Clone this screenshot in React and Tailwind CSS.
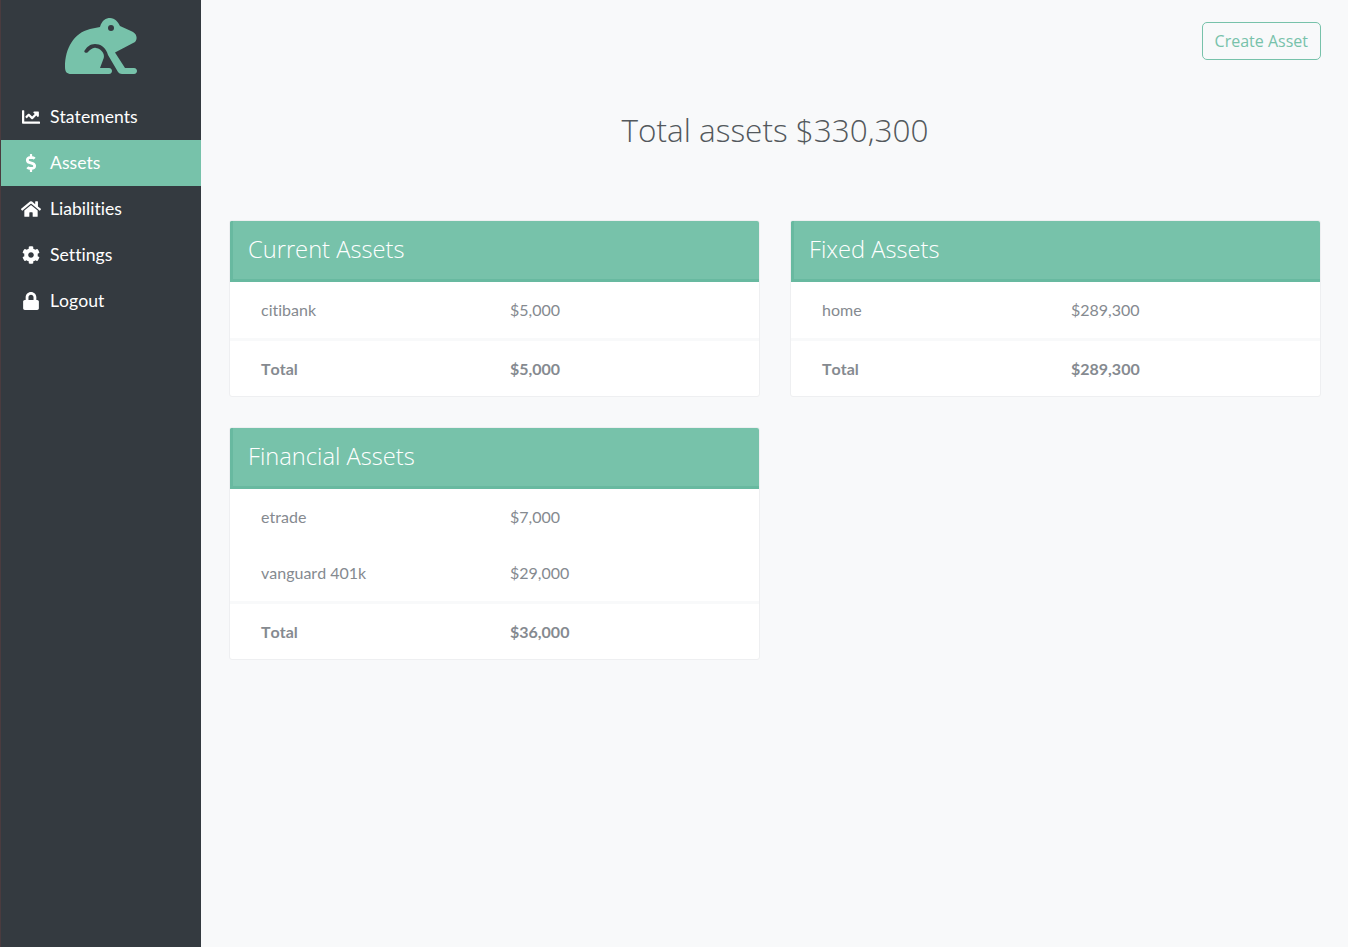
import { FaChartLine, FaDollarSign, FaHome, FaCog, FaLock } from 'react-icons/fa';

const navItems = [
  { label: 'Statements', icon: FaChartLine, size: 18 },
  { label: 'Assets', icon: FaDollarSign, size: 18, active: true },
  { label: 'Liabilities', icon: FaHome, size: 20 },
  { label: 'Settings', icon: FaCog, size: 18 },
  { label: 'Logout', icon: FaLock, size: 18 },
];

const cards = [
  { title: 'Current Assets', rows: [['citibank', '$5,000']], total: '$5,000' },
  { title: 'Fixed Assets', rows: [['home', '$289,300']], total: '$289,300' },
  { title: 'Financial Assets', rows: [['etrade', '$7,000'], ['vanguard 401k', '$29,000']], total: '$36,000' },
];

function Logo() {
  return (
    <svg width="74" height="58" viewBox="64 17 74 58" className="block">
      <path
        fill="#77c2aa"
        d="M65 67 C65 48 74 33 90 29 L100 27 C102 20 106 18 110 18 C115 18 118 22 120 26 L131 31 C137 33 138 39 135 42 L115 52.5 L125 68 L134 68 C138 68 138 74 134 74 L122 74 C120 74 119 73 118 72 L108 55 C106 47 100 44 95 44 C90 44 87 47 85 50 C83 52 86 54 88 52 C90 50 93 47 96 48 C102 49 106 55 103 60 L100 68 L109 68 C113 68 113 74 109 74 L71 74 C67 74 65 72 65 67 Z"
      />
      <circle cx="111" cy="28" r="3" fill="#343a40" />
    </svg>
  );
}

function AssetCard({ title, rows, total }) {
  return (
    <div className="rounded-[3px] border border-[#eeeff1] bg-white overflow-hidden">
      <div className="h-[61px] border-b-[3px] border-l-[3px] border-[#68b9a0] bg-[#77c2aa] pl-[15px] flex items-center">
        <h2 className="font-['Open_Sans'] text-[23.7px] font-light text-white [font-kerning:normal]">{title}</h2>
      </div>
      {rows.map(([name, value]) => (
        <div key={name} className="h-14 grid grid-cols-2 items-center pl-[31px] text-[16px] text-[#858a90]">
          <span>{name}</span>
          <span>{value}</span>
        </div>
      ))}
      <div className="h-[58px] grid grid-cols-2 items-center border-t-[3px] border-[#f8f9fa] pl-[31px] text-[16px] font-bold text-[#858a90]">
        <span>Total</span>
        <span>{total}</span>
      </div>
    </div>
  );
}

export default function App() {
  return (
    <div className="min-h-[947px] flex bg-[#f8f9fa] font-['Lato',sans-serif] [font-kerning:none] [font-variant-ligatures:none]">
      <aside className="w-[201px] shrink-0 border-l border-[#4a3b3f] bg-[#343a40]">
        <div className="h-[94px] flex justify-center pt-[17px]">
          <Logo />
        </div>
        <nav>
          {navItems.map(({ label, icon: Icon, size, active }) => (
            <div
              key={label}
              className={`h-[46px] flex items-center text-[17.6px] text-white ${active ? 'bg-[#77c2aa]' : ''}`}
            >
              <span className="w-[49px] flex justify-center pl-[11px]">
                <Icon size={size} />
              </span>
              <span>{label}</span>
            </div>
          ))}
        </nav>
      </aside>
      <main className="flex-1 pl-[28px] pr-[27px] pt-[22px]">
        <div className="flex justify-end">
          <button className="h-[38px] rounded-[5px] border border-[#77c2aa] px-3 font-['Open_Sans'] text-[16px] text-[#77c2aa] [font-kerning:normal]">
            Create Asset
          </button>
        </div>
        <h1 className="mt-[48px] h-[44px] text-center font-['Open_Sans'] text-[31.5px] font-light leading-[44px] text-[#53585c] [font-kerning:normal]">
          Total assets $330,300
        </h1>
        <div className="mt-[68px] grid grid-cols-2 items-start gap-x-[30px] gap-y-[30px]">
          {cards.map((card) => (
            <AssetCard key={card.title} {...card} />
          ))}
        </div>
      </main>
    </div>
  );
}
